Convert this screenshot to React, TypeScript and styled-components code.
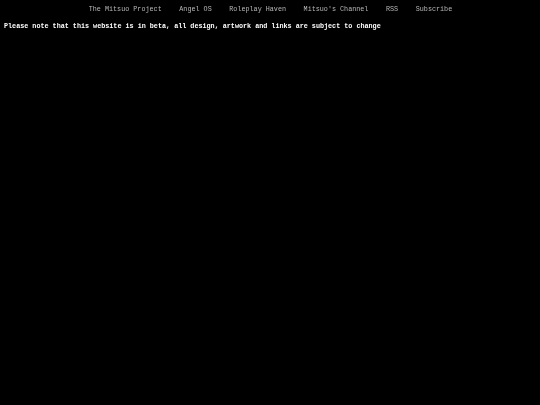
import React from "react";
import styled, { createGlobalStyle } from "styled-components";

const GlobalStyle = createGlobalStyle`
  html, body {
    margin: 0;
    padding: 0;
    background: #000;
  }
  body {
    font-family: "Liberation Mono", "Courier New", monospace;
    -webkit-font-smoothing: antialiased;
  }
`;

const Page = styled.div`
  min-height: 405px;
  background: #000;
  will-change: transform;
`;

const Nav = styled.nav`
  display: flex;
  justify-content: center;
  gap: 17.6px;
  padding: 5px 0 0 1px;
  height: 12px;
`;

const NavLink = styled.a`
  color: #b8b8b8;
  font-size: 6.75px;
  line-height: 8px;
  text-decoration: none;
  white-space: pre;
`;

const Notice = styled.p`
  margin: 0;
  padding: 5px 0 0 4px;
  color: #fff;
  font-weight: bold;
  font-size: 6.75px;
  line-height: 8px;
  white-space: pre;
`;

const links = [
  "The Mitsuo Project",
  "Angel OS",
  "Roleplay Haven",
  "Mitsuo's Channel",
  "RSS",
  "Subscribe",
];

const App: React.FC = () => {
  return (
    <>
      <GlobalStyle />
      <Page>
        <Nav>
          {links.map((l) => (
            <NavLink key={l} href="#">
              {l}
            </NavLink>
          ))}
        </Nav>
        <Notice>
          Please note that this website is in beta, all design, artwork and links are subject to change
        </Notice>
      </Page>
    </>
  );
};

export default App;
